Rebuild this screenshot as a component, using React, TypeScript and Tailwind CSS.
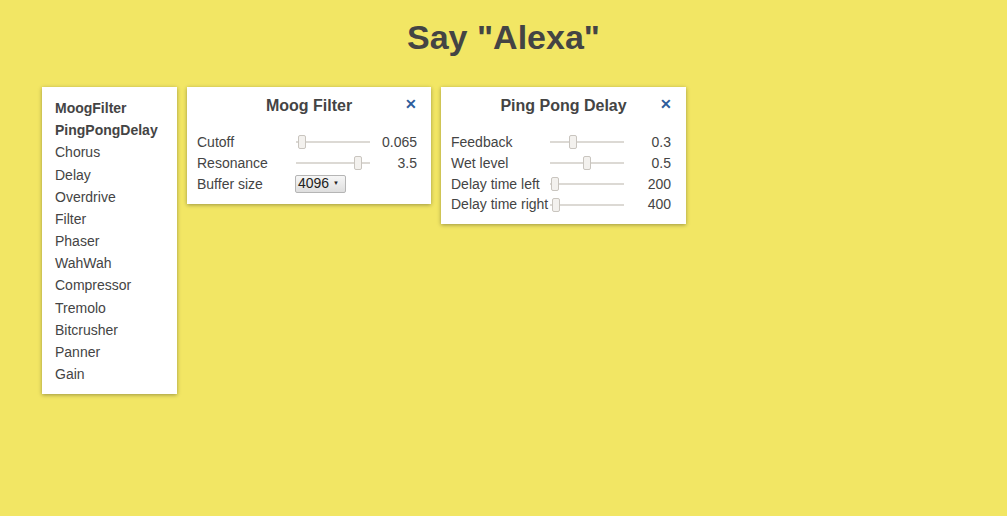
import React from "react";

const font = { fontFamily: '"Liberation Sans", Arial, sans-serif' };

const effects = [
  "MoogFilter",
  "PingPongDelay",
  "Chorus",
  "Delay",
  "Overdrive",
  "Filter",
  "Phaser",
  "WahWah",
  "Compressor",
  "Tremolo",
  "Bitcrusher",
  "Panner",
  "Gain",
];

function Slider({ pos }: { pos: number }) {
  return (
    <div className="relative h-[20px] w-[74px]">
      <div className="absolute left-0 right-0 top-[9px] h-[2px] bg-[#dcd9d4]" />
      <div
        className="absolute top-[3px] h-[14px] w-[8px] -ml-[4px] rounded-[2px] border border-[#c9c5bf] bg-[#f3f1ee]"
        style={{ left: `${pos}px` }}
      />
    </div>
  );
}

function Row({ label, children, value }: { label: string; children: React.ReactNode; value?: string }) {
  return (
    <div className="flex h-[20.8px] items-center">
      <div className="w-[99px] shrink-0">{label}</div>
      {children}
      {value !== undefined && <div className="flex-1 text-right">{value}</div>}
    </div>
  );
}

function Panel({
  title,
  width,
  pr,
  pb,
  children,
}: {
  title: string;
  width: string;
  pr: string;
  pb: string;
  children: React.ReactNode;
}) {
  return (
    <div className={`${width} bg-white ${pb} shadow-[0_1px_4px_rgba(0,0,0,0.35)]`}>
      <div className="relative flex h-[37px] items-center justify-center">
        <span className="text-[16px] font-bold text-[#444]">{title}</span>
        <span className="absolute right-[14px] top-[10px] text-[14px] font-bold leading-none text-[#2d5c9c]">✕</span>
      </div>
      <div className={`pl-[10px] ${pr} pt-[8px] text-[14px] text-[#444]`}>{children}</div>
    </div>
  );
}

export default function App() {
  return (
    <div className="min-h-[516px] w-full bg-[#f2e664] text-[#444]" style={font}>
      <div className="pt-[17px] text-center text-[34px] font-bold leading-[40px] text-[#444]">Say "Alexa"</div>
      <div className="mt-[30px] flex items-start gap-[10px] pl-[42px]">
        <div className="w-[135px] bg-white pb-[9px] pl-[13px] pt-[10px] text-[14px] leading-[22.17px] shadow-[0_1px_4px_rgba(0,0,0,0.35)]">
          {effects.map((e, i) => (
            <div key={e} className={i < 2 ? "font-bold" : ""}>
              {e}
            </div>
          ))}
        </div>
        <Panel title="Moog Filter" width="w-[244px]" pr="pr-[14px]" pb="pb-[10px]">
          <Row label="Cutoff" value="0.065">
            <Slider pos={6} />
          </Row>
          <Row label="Resonance" value="3.5">
            <Slider pos={62} />
          </Row>
          <Row label="Buffer size">
            <div className="-ml-[1px] flex h-[18px] w-[51px] items-center justify-between rounded-[2px] border border-[#b5b5b5] bg-gradient-to-b from-[#f6f6f6] to-[#dedede] pl-[2px] pr-[6px] text-[14px] text-[#222]">
              <span>4096</span>
              <span className="text-[6px]">▼</span>
            </div>
          </Row>
        </Panel>
        <Panel title="Ping Pong Delay" width="w-[245px]" pr="pr-[15px]" pb="pb-[9px]">
          <Row label="Feedback" value="0.3">
            <Slider pos={23} />
          </Row>
          <Row label="Wet level" value="0.5">
            <Slider pos={37} />
          </Row>
          <Row label="Delay time left" value="200">
            <Slider pos={5} />
          </Row>
          <Row label="Delay time right" value="400">
            <Slider pos={6} />
          </Row>
        </Panel>
      </div>
    </div>
  );
}
